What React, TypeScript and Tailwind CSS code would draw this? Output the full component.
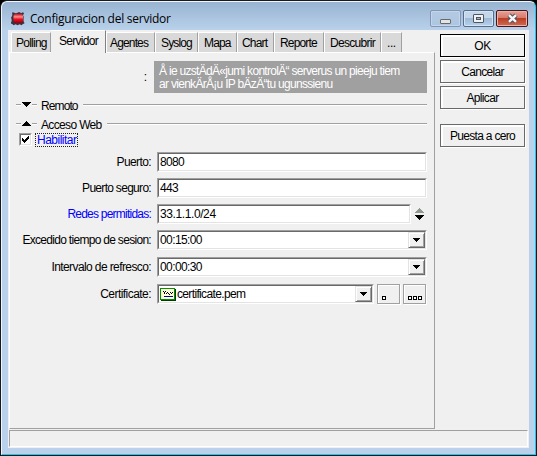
import type { ReactNode } from "react";

const ui = "font-['Liberation_Sans',Arial,sans-serif]";

type TabProps = { label: string; box: string; text: string };

function Tab({ label, box, text }: TabProps) {
  return (
    <div className={`mt-[2px] flex h-[20px] items-center border-r border-t border-r-[#a0a0a0] border-t-white bg-[#d9d9d9] shadow-[inset_1px_0_0_#fff] ${box}`}>
      <span className={`whitespace-pre leading-[14px] ${text}`}>{label}</span>
    </div>
  );
}

function PushButton({ label, track, primary = false, className = "" }: { label: string; track: string; primary?: boolean; className?: string }) {
  return (
    <button
      className={`flex h-[23px] w-[85px] items-center justify-center border bg-[#f0f0f0] shadow-[inset_2px_2px_0_#fff,1px_1px_0_#fff] ${primary ? "border-black" : "border-[#696969]"} ${className}`}
    >
      <span className={`leading-[14px] ${track}`}>{label}</span>
    </button>
  );
}

function Field({ className, children }: { className: string; children: ReactNode }) {
  return (
    <div className={`flex border border-b-white border-l-[#a0a0a0] border-r-white border-t-[#a0a0a0] ${className}`}>
      <div className="flex min-w-0 flex-1 items-center border border-b-[#e3e3e3] border-l-[#696969] border-r-[#e3e3e3] border-t-[#696969] bg-white pl-px">
        {children}
      </div>
    </div>
  );
}

function DropArrow() {
  return (
    <div className="ml-auto flex h-full w-[17px] items-center justify-center border border-b-[#696969] border-l-[#e3e3e3] border-r-[#696969] border-t-[#e3e3e3] bg-[#f0f0f0] shadow-[inset_1px_1px_0_#fff,inset_-1px_-1px_0_#a0a0a0]">
      <svg width="7" height="4" shapeRendering="crispEdges">
        <path d="M0 0h7v1H6v1H5v1H4v1H3V3H2V2H1V1H0z" />
      </svg>
    </div>
  );
}

function Row({ label, track, blue = false, className, children }: { label: string; track: string; blue?: boolean; className: string; children: ReactNode }) {
  return (
    <div className={`flex items-center ${className}`}>
      <span className={`w-[141px] whitespace-nowrap text-right leading-[14px] ${track} ${blue ? "text-[#0000ff]" : ""}`}>{label}</span>
      <div className="ml-[6px] flex h-full items-center">{children}</div>
    </div>
  );
}

function Section({ label, open, track }: { label: string; open: boolean; track: string }) {
  return (
    <div className="ml-[6px] flex h-[19px] w-[411px] items-center">
      <span className="h-[2px] w-[5px] border-b border-t border-b-white border-t-[#a0a0a0]" />
      <svg width="11" height="5" shapeRendering="crispEdges">
        <path d={open ? "M5 0h1v1h1v1h1v1h1v1h1v1H1V4h1V3h1V2h1V1h1z" : "M1 0h9v1H9v1H8v1H7v1H6v1H5V4H4V3H3V2H2V1H1z"} />
      </svg>
      <span className="h-[2px] w-[5px] border-b border-t border-b-white border-t-[#a0a0a0]" />
      <span className={`ml-[4px] mr-[5px] mt-[2px] whitespace-nowrap leading-[14px] ${track}`}>{label}</span>
      <span className="h-[2px] flex-1 border-b border-t border-b-white border-t-[#a0a0a0]" />
    </div>
  );
}

function TitleBar() {
  return (
    <header className="flex h-[28px] items-start pl-[9px]">
      <svg className="mt-[9px]" width="15" height="15" viewBox="0 0 15 15">
        <defs>
          <linearGradient id="red" x1="0" y1="0" x2="0" y2="1">
            <stop offset="0" stopColor="#a80818" />
            <stop offset=".35" stopColor="#ff8c8c" />
            <stop offset=".6" stopColor="#f01020" />
            <stop offset="1" stopColor="#950010" />
          </linearGradient>
        </defs>
        <path d="M1 1.5h2l1 .7h2l1-1h2l1 1 2-1 1 1-1 2 .6 1v5l1 2-2 1-1 1-2-1-2 1-2-1-2 1-1-1-2-1 1-2V8l-.6-1L1.400 4z" fill="#40303c" />
        <rect x="2.500" y="2.500" width="9.500" height="9.500" rx="3" fill="url(#red)" />
      </svg>
      <h1 className="ml-[4px] mt-[8px] whitespace-nowrap font-['Open_Sans',sans-serif] text-[12px] leading-[18px] tracking-[-0.25px]">Configuracion del servidor</h1>
      <div className="ml-auto mr-[7px] mt-[8px] flex h-[17px]">
        <div className="flex w-[31px] justify-center rounded-[2px] border border-[#8096b3] bg-linear-to-b from-[#b4cae3] to-[#adc6e1] pt-[8px] shadow-[inset_0_0_0_1px_#c3d6eb]">
          <span className="h-[5px] w-[11px] rounded-[1px] border border-[#686868] bg-[#e4e4e4]" />
        </div>
        <div className="ml-[2px] flex w-[31px] items-center justify-center rounded-[2px] border border-[#586c8a] bg-[linear-gradient(#c3d6ea_0_45%,#9bb7d5_45%,#b8d2ed)] shadow-[inset_0_0_0_1px_#d5e4f3]">
          <span className="flex h-[9px] w-[11px] items-center justify-center rounded-[1px] border border-[#505660] bg-[#f2f2f2]">
            <span className="h-[3px] w-[5px] border border-[#505660] bg-[#9bb7d5]" />
          </span>
        </div>
        <div className="ml-[2px] flex w-[32px] items-center justify-center rounded-[2px] border border-[#461520] bg-[linear-gradient(#e5a196_0,#d77c6b_45%,#b83923_45%,#d06c50)] shadow-[inset_0_0_0_1px_#e9b3aa]">
          <svg width="13" height="11" viewBox="0 0 13 11">
            <path d="M3 2.2l7 6.6M10 2.2L3 8.8" stroke="#4d5361" strokeWidth="4.4" />
            <path d="M3 2.2l7 6.6M10 2.2L3 8.8" stroke="#f5f5f5" strokeWidth="2.5" />
          </svg>
        </div>
      </div>
    </header>
  );
}

export default function App() {
  return (
    <div className="h-[456px] w-[537px] overflow-hidden bg-black">
      <main className={`flex h-[456px] w-[537px] flex-col rounded-t-[7px] border border-[#1a1a1e] ${ui} text-[12px] text-black`}>
        <div className="flex h-[454px] flex-col rounded-t-[6px] border border-b-[#1cc9ea] border-l-[#eef6ff] border-r-[#1cc9ea] border-t-[#eef6ff] bg-[#b9d1ea] bg-[linear-gradient(#98b4d2_0,#b9d1ea_28px)]">
          <TitleBar />
          <div className="ml-[6px] flex h-[418px] w-[521px] flex-col bg-[#f0f0f0]">
            <div className="flex h-[399px]">
              <div className="flex w-[427px] flex-col">
                <nav className="relative z-10 flex h-[22px] pl-[3px]">
                  <Tab label="Polling" box="w-[40px] pl-[5px]" text="tracking-[-0.75px]" />
                  <div className="flex h-[23px] w-[55px] border-r border-t border-r-[#808080] border-t-white bg-[#f0f0f0] pl-[8px] pt-[3px]">
                    <span className="leading-[14px] tracking-[-0.7px]">Servidor</span>
                  </div>
                  <Tab label="Agentes" box="w-[49px] pl-[4px]" text="tracking-[-0.85px]" />
                  <Tab label="Syslog" box="w-[43px] pl-[6px]" text="tracking-[-0.85px]" />
                  <Tab label="Mapa" box="w-[39px] pl-[6px]" text="tracking-[-0.85px]" />
                  <Tab label="Chart" box="w-[37px] pl-[5px]" text="tracking-[-0.8px]" />
                  <Tab label="Reporte" box="w-[50px] pl-[6px]" text="tracking-[-0.85px]" />
                  <Tab label="Descubrir" box="w-[57px] pl-[6px]" text="tracking-[-0.7px]" />
                  <Tab label="..." box="w-[21px] pl-[6px]" text="tracking-[-0.4px]" />
                </nav>
                <section className="ml-px flex h-[377px] w-[426px] flex-col border border-b-[#a0a0a0] border-l-white border-r-[#a0a0a0] border-t-white">
                  <div className="mt-[8px] flex h-[32px]">
                    <span className="w-[137px] text-right leading-[32px]">:</span>
                    <p className="ml-[7px] w-[273px] whitespace-pre bg-[#a0a0a0] pl-[5px] pt-[4px] leading-[13px] text-white">
                      <span className="block tracking-[-0.7px]">Å ie uzstÄdÄ«jumi kontrolÄ“ serverus un pieeju tiem</span>
                      <span className="block tracking-[-0.7px]">ar vienkÄrÅ¡u IP bÄzÄ“tu ugunssienu</span>
                    </p>
                  </div>
                  <div className="mt-[2px]">
                    <Section label="Remoto" open={false} track="tracking-[-0.9px]" />
                    <Section label="Acceso Web" open track="tracking-[-0.65px]" />
                  </div>
                  <div className="ml-[9px] flex h-[14px]">
                    <span className="h-[13px] w-[13px] border border-b-white border-l-[#a0a0a0] border-r-white border-t-[#a0a0a0]">
                      <span className="block h-[11px] w-[11px] border border-b-[#e3e3e3] border-l-[#696969] border-r-[#e3e3e3] border-t-[#696969] bg-white">
                        <svg width="9" height="9" shapeRendering="crispEdges">
                          <path d="M1 3h1v1h1v1h1V4h1V3h1V2h1V1h1v3H7v1H6v1H5v1H4v1H3V7H2V6H1z" />
                        </svg>
                      </span>
                    </span>
                    <span className="ml-[3px] flex h-[14px] w-[43px] border border-dotted border-[#20200c] pl-px leading-[12px] tracking-[-0.5px] text-[#0000ff]">Habilitar</span>
                  </div>
                  <Row label="Puerto:" track="tracking-[-0.6px]" className="mt-[5px] h-[20px]">
                    <Field className="h-[20px] w-[270px]"><span className="tracking-[-0.65px]">8080</span></Field>
                  </Row>
                  <Row label="Puerto seguro:" track="tracking-[-0.7px]" className="mt-[6px] h-[20px]">
                    <Field className="h-[20px] w-[270px]"><span className="tracking-[-0.65px]">443</span></Field>
                  </Row>
                  <Row label="Redes permitidas:" blue track="tracking-[-0.77px]" className="mt-[6px] h-[20px]">
                    <Field className="h-[20px] w-[254px]"><span className="tracking-[-0.4px]">33.1.1.0/24</span></Field>
                    <svg className="ml-[4px]" width="9" height="12" shapeRendering="crispEdges">
                      <path d="M4 0h1v1h1v1h1v1h1v1h1v1H0V4h1V3h1V2h1V1h1z" fill="#8f998f" />
                      <path d="M0 7h9v1H8v1H7v1H6v1H5v1H4v-1H3v-1H2V9H1V8H0z" />
                    </svg>
                  </Row>
                  <Row label="Excedido tiempo de sesion:" track="tracking-[-0.7px]" className="mt-[6px] h-[20px]">
                    <Field className="h-[20px] w-[270px]"><span className="tracking-[-0.6px]">00:15:00</span><DropArrow /></Field>
                  </Row>
                  <Row label="Intervalo de refresco:" track="tracking-[-0.6px]" className="mt-[7px] h-[20px]">
                    <Field className="h-[20px] w-[270px]"><span className="tracking-[-0.6px]">00:00:30</span><DropArrow /></Field>
                  </Row>
                  <Row label="Certificate:" track="tracking-[-0.55px]" className="mt-[7px] h-[20px]">
                    <Field className="h-[20px] w-[217px]">
                      <svg width="16" height="13" shapeRendering="crispEdges">
                        <path d="M1 1h15v12H1z" fill="#003c00" />
                        <path d="M0 0h15v12H0z" fill="#009000" />
                        <path d="M1 1h13v10H1z" fill="#ffffd8" />
                        <path d="M3 3h1v1H3zM5 3h1v1H5zM4 4h1v2H4zM7 4h1v1H7zM6 5h1v1H6zM8 5h1v1H8zM10 4h1v1h-1zM9 6h1v1H9zM11 5h1v1h-1zM12 4h1v1h-1z" />
                        <path d="M4 8h9v1H4z" fill="#0000b0" />
                      </svg>
                      <span className="ml-px tracking-[-0.65px]">certificate.pem</span>
                      <DropArrow />
                    </Field>
                    <div className="ml-[3px] flex h-[20px] w-[23px] items-end border border-[#a0a0a0] pb-[3px] pl-[4px] shadow-[inset_1px_1px_0_#fff,1px_1px_0_#fff]">
                      <span className="h-[4px] w-[4px] border border-black bg-white" />
                    </div>
                    <div className="ml-[3px] flex h-[20px] w-[23px] items-end gap-px border border-[#a0a0a0] pb-[3px] pl-[4px] shadow-[inset_1px_1px_0_#fff,1px_1px_0_#fff]">
                      <span className="h-[4px] w-[4px] border border-black bg-white" />
                      <span className="h-[4px] w-[4px] border border-black bg-white" />
                      <span className="h-[4px] w-[4px] border border-black bg-white" />
                    </div>
                  </Row>
                </section>
              </div>
              <aside className="ml-[5px] pt-[4px]">
                <PushButton label="OK" primary track="tracking-[-0.5px]" />
                <PushButton label="Cancelar" className="mt-[3px]" track="tracking-[-0.7px]" />
                <PushButton label="Aplicar" className="mt-[3px]" track="tracking-[-0.65px]" />
                <PushButton label="Puesta a cero" className="mt-[15px]" track="tracking-[-0.7px]" />
              </aside>
            </div>
            <footer className="ml-px mt-px h-[17px] w-[519px] border border-b-white border-l-[#a0a0a0] border-r-white border-t-[#a0a0a0]" />
          </div>
        </div>
      </main>
    </div>
  );
}
